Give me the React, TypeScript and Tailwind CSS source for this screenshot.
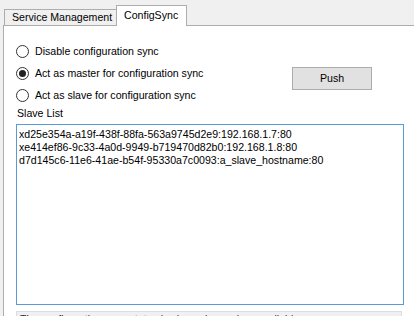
import { useState } from 'react'

const slaves = [
  'xd25e354a-a19f-438f-88fa-563a9745d2e9:192.168.1.7:80',
  'xe414ef86-9c33-4a0d-9949-b719470d82b0:192.168.1.8:80',
  'd7d145c6-11e6-41ae-b54f-95330a7c0093:a_slave_hostname:80',
]

function Radio({ checked, label }: { checked: boolean; label: string }) {
  return (
    <label className="flex items-center gap-[6px]">
      <span className="flex h-[13px] w-[13px] items-center justify-center rounded-full border border-[#333333] bg-white">
        {checked && <span className="h-[7px] w-[7px] rounded-full bg-[#222222]" />}
      </span>
      <span>{label}</span>
    </label>
  )
}

export default function App() {
  const [mode] = useState('master')

  return (
    <div className="h-[316px] w-[414px] overflow-hidden bg-[#f0f0f0] font-['Liberation_Sans',Arial,sans-serif] text-[10.6px] leading-[13px] text-black">
      {/* Tabs */}
      <div className="flex h-[25px] items-end pl-[4px]">
        <div className="flex h-[16px] w-[113px] items-center border-l border-t border-[#adadad] bg-[#f0f0f0] pl-[7px]">
          Service Management
        </div>
        <div className="relative z-10 -mb-px -ml-px flex h-[21px] w-[71px] items-start border-x border-t border-[#adadad] bg-white pl-[7px] pt-[3px]">
          ConfigSync
        </div>
      </div>

      {/* Panel */}
      <div className="ml-[3px] h-full border-l border-t border-[#adadad] bg-white pl-[12px] pt-[14px]">
        <div className="flex h-[22px] items-center">
          <Radio checked={mode === 'disabled'} label="Disable configuration sync" />
        </div>
        <div className="flex h-[22px] items-center">
          <div className="w-[276px]">
            <Radio checked={mode === 'master'} label="Act as master for configuration sync" />
          </div>
          <button className="mt-[5px] h-[23px] w-[80px] shrink-0 self-start border border-[#adadad] bg-[#e1e1e1]">
            Push
          </button>
        </div>
        <div className="flex h-[22px] items-center">
          <Radio checked={mode === 'slave'} label="Act as slave for configuration sync" />
        </div>
        <div className="mt-[1px] h-[13px] pl-[1px]">Slave List</div>
        <div className="mt-[4px] h-[181px] w-[388px] border border-[#5b9bd5] bg-white px-[2px] pt-[3px]">
          {slaves.map((s) => (
            <div key={s}>{s}</div>
          ))}
        </div>
        <div className="mt-[6px] h-[40px] w-[386px] border border-[#dcdcdc] bg-[#f0f0f0] px-[3px] pt-[1px] text-[#333333]">
          The configuration sync status is shown here when available.
        </div>
      </div>
    </div>
  )
}
